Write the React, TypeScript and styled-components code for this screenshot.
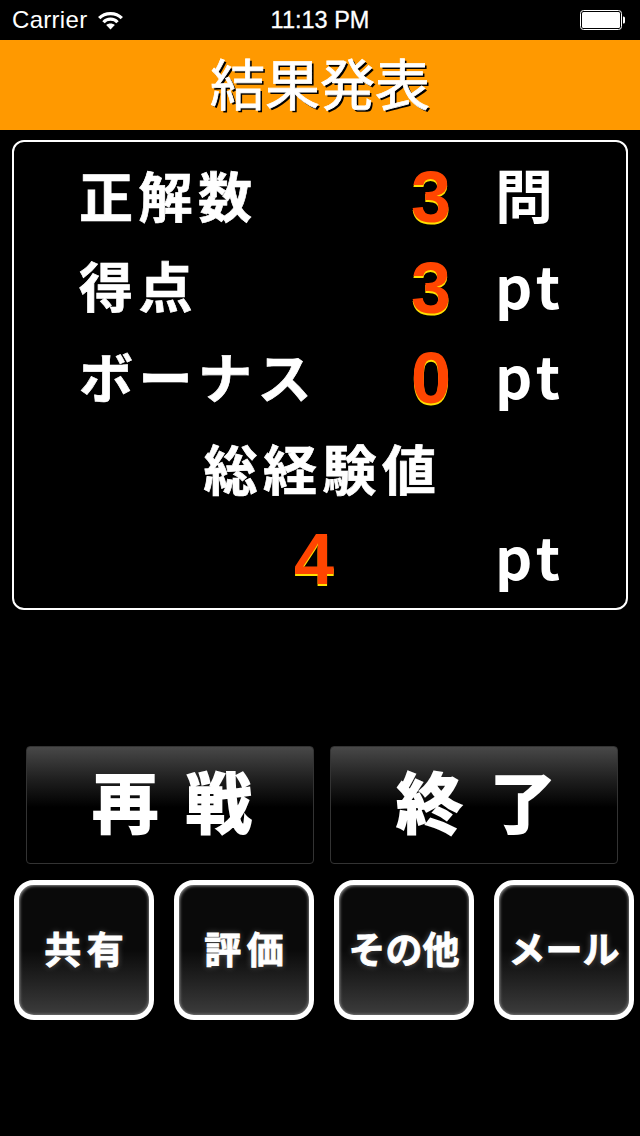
import React from "react";
import styled, { createGlobalStyle } from "styled-components";

const Global = createGlobalStyle`
  html, body { margin: 0; padding: 0; background: #000; }
  #root { width: 640px; height: 1136px; overflow: hidden; }
`;
const JP = `"Liberation Sans", "Noto Sans CJK JP", sans-serif`;

const Page = styled.div`
  width: 640px; height: 1136px; background: #000; color: #fff;
  font-family: ${JP}; display: flex; flex-direction: column;
`;
const StatusBar = styled.div`
  height: 40px; display: grid; grid-template-columns: 1fr auto 1fr; align-items: center;
  padding: 0 14px 0 12px; font-family: "Liberation Sans", sans-serif; font-size: 24px;
`;
const Carrier = styled.div`display: flex; align-items: center; gap: 11px; letter-spacing: 0.3px;`;
const Time = styled.div`font-size: 23.5px; letter-spacing: 0; -webkit-text-stroke: 0.3px #fff; padding-left: 2px;`;
const BatteryWrap = styled.div`justify-self: end; display: flex; margin-right: 1px;`;
const Header = styled.h1`
  margin: 0; height: 90px; padding-top: 3px; box-sizing: border-box; background: #ff9900;
  display: flex; align-items: center; justify-content: center;
  font-size: 55px; font-weight: 400; line-height: 1; color: #fff; text-shadow: 2px 2px 0 #000;
  -webkit-text-stroke: 0.8px #fff; letter-spacing: 0;
`;
const Panel = styled.section`
  box-sizing: border-box; margin: 10px 12px 0; height: 470px; border: 2px solid #fff; border-radius: 12px;
  padding: 10px 0 0; display: grid; grid-auto-rows: 90.5px;
`;
const Row = styled.div`
  display: grid; grid-template-columns: 65px 317px 70px auto; align-items: center;
`;
const Label = styled.div`
  grid-column: 2; padding-top: 3px; font-size: 54px; font-weight: 700; line-height: 1; letter-spacing: 5.5px; white-space: nowrap;
  -webkit-text-stroke: 0.7px #fff;
`;
const Value = styled.div<{ $column?: number }>`
  grid-column: ${(p) => p.$column ?? 3}; text-align: center; font-family: "Liberation Sans", sans-serif; font-size: 72px; font-weight: 700;
  line-height: 1; color: #ff4500; text-shadow: 0 2px 0 #ffe000;
`;
const Unit = styled.div<{ $column?: number; $gap?: number }>`
  grid-column: ${(p) => p.$column ?? 4}; margin: -8px 0 0 ${(p) => p.$gap ?? 29}px; font-family: "Noto Sans CJK JP", sans-serif;
  font-size: 58px; font-weight: 700; line-height: 1; letter-spacing: 5px; white-space: nowrap;
`;
const TotalHead = styled.div`
  text-align: center; padding: 3px 0 0 5px; box-sizing: border-box; font-size: 54px; font-weight: 700; line-height: 90px; letter-spacing: 5.5px;
  -webkit-text-stroke: 0.7px #fff;
`;
const TotalRow = styled.div`
  display: grid; grid-template-columns: 265px 70px 146px auto; align-items: center;
`;
const BigRow = styled.div`display: flex; gap: 16px; margin: 136px 0 0 26px;`;
const BigButton = styled.button`
  width: 288px; height: 118px; box-sizing: border-box; padding: 0 0 0 4px; color: #fff; border: 1px solid #333; border-radius: 4px;
  background: linear-gradient(#484848 0%, #1c1c1c 30%, #000 52%, #000 100%);
  font-family: ${JP}; font-size: 66px; font-weight: 700; line-height: 1; word-spacing: 9px;
  -webkit-text-stroke: 2px #fff; white-space: pre;
`;
const SmallRow = styled.div`display: flex; gap: 20px; margin: 16px 0 0 14px;`;
const SmallButton = styled.button`
  width: 140px; height: 140px; box-sizing: border-box; padding: 2px 0 0; color: #fff; border: 5px solid #fff; border-radius: 20px;
  background: linear-gradient(#0a0a0a 0%, #0a0a0a 50%, #3c3c3c 100%);
  box-shadow: inset 1px 1px 3px #888, inset -1px -1px 3px #666;
  font-family: ${JP}; font-size: 37px; font-weight: 700; line-height: 1; white-space: pre; word-spacing: -5px;
  -webkit-text-stroke: 0.8px #fff; text-shadow: 0 0 6px rgba(255,255,255,.35);
`;

const Wifi = () => (
  <svg width="25" height="19" viewBox="0 0 25 19" fill="none" stroke="#fff" strokeWidth="3.2">
    <path d="M1.2 7.2 C7 1 18 1 23.8 7.2" />
    <path d="M5.5 11.2 C9 7.2 16 7.2 19.5 11.2" />
    <path d="M12.5 18.5 L8.2 14 C10.5 12 14.5 12 16.8 14 Z" fill="#fff" stroke="none" />
  </svg>
);
const Battery = () => (
  <svg width="45" height="20" viewBox="0 0 45 20">
    <rect x="0.5" y="0.5" width="41" height="19" rx="3" fill="none" stroke="#fff" strokeWidth="1" />
    <rect x="2" y="2" width="38" height="16" rx="1.5" fill="#fff" />
    <path d="M43 6.5 h.5 a1.5 1.5 0 0 1 1.5 1.5 v4 a1.5 1.5 0 0 1 -1.5 1.5 h-.5 Z" fill="#fff" />
  </svg>
);

const rows = [
  { label: "正解数", value: "3", unit: "問" },
  { label: "得点", value: "3", unit: "pt" },
  { label: "ボーナス", value: "0", unit: "pt" },
];

export default function App() {
  return (
    <Page>
      <Global />
      <StatusBar>
        <Carrier>Carrier <Wifi /></Carrier>
        <Time>11:13 PM</Time>
        <BatteryWrap><Battery /></BatteryWrap>
      </StatusBar>
      <Header>結果発表</Header>
      <Panel>
        {rows.map((r) => (
          <Row key={r.label}>
            <Label>{r.label}</Label>
            <Value>{r.value}</Value>
            <Unit>{r.unit}</Unit>
          </Row>
        ))}
        <TotalHead>総経験値</TotalHead>
        <TotalRow>
          <Value $column={2}>4</Value>
          <Unit $column={4} $gap={0}>pt</Unit>
        </TotalRow>
      </Panel>
      <BigRow>
        <BigButton>再 戦</BigButton>
        <BigButton>終 了</BigButton>
      </BigRow>
      <SmallRow>
        <SmallButton>共 有</SmallButton>
        <SmallButton>評 価</SmallButton>
        <SmallButton>その他</SmallButton>
        <SmallButton>メール</SmallButton>
      </SmallRow>
    </Page>
  );
}
